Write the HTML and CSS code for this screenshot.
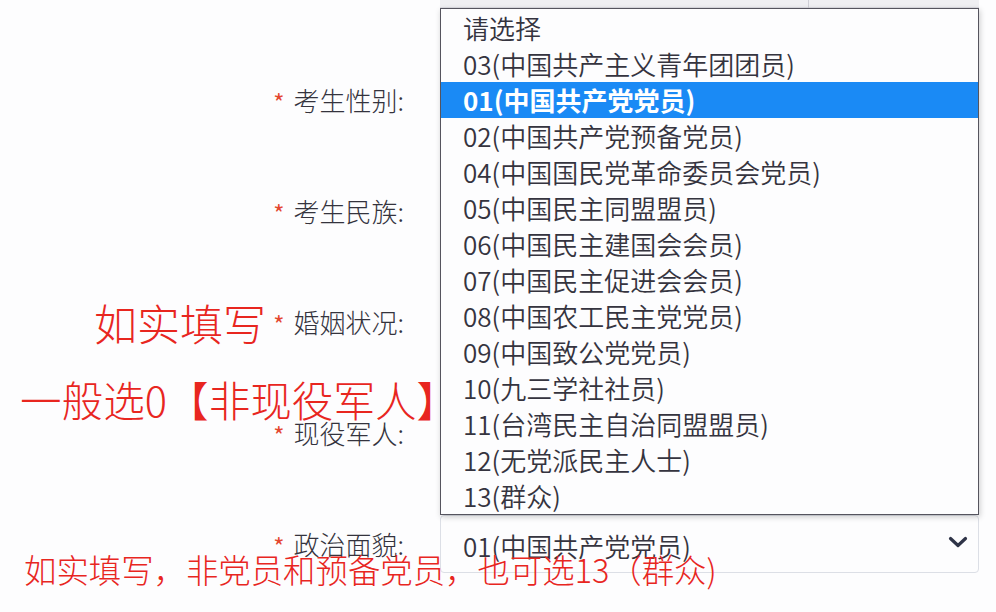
FILE: index.html
```html
<!DOCTYPE html>
<html lang="zh-CN">
<head>
<meta charset="utf-8">
<title>政治面貌</title>
<link rel="stylesheet" href="styles.css">
</head>
<body>
<div class="page">
  <div class="prev-field"><span class="prev-divider"></span></div>
  <form class="form">
    <div class="row">
      <label class="label"><span class="req">*</span>考生性别:</label>
      <div class="select"></div>
    </div>
    <div class="row">
      <label class="label"><span class="req">*</span>考生民族:</label>
      <div class="select"></div>
    </div>
    <div class="row">
      <label class="label"><span class="req">*</span>婚姻状况:</label>
      <div class="select"></div>
    </div>
    <div class="row">
      <label class="label"><span class="req">*</span>现役军人:</label>
      <div class="select"></div>
    </div>
    <div class="row">
      <label class="label"><span class="req">*</span>政治面貌:</label>
      <div class="select">
        <span class="select-value">01(中国共产党党员)</span>
        <svg class="chevron" width="20" height="12" viewBox="0 0 20 12"><path d="M2.5 2.5 L10 9.5 L17.5 2.5" fill="none" stroke="#2f3448" stroke-width="3.2" stroke-linecap="round" stroke-linejoin="round"/></svg>
      </div>
    </div>
  </form>

  <ul class="dropdown">
    <li class="opt">请选择</li>
    <li class="opt">03(中国共产主义青年团团员)</li>
    <li class="opt selected">01(中国共产党党员)</li>
    <li class="opt">02(中国共产党预备党员)</li>
    <li class="opt">04(中国国民党革命委员会党员)</li>
    <li class="opt">05(中国民主同盟盟员)</li>
    <li class="opt">06(中国民主建国会会员)</li>
    <li class="opt">07(中国民主促进会会员)</li>
    <li class="opt">08(中国农工民主党党员)</li>
    <li class="opt">09(中国致公党党员)</li>
    <li class="opt">10(九三学社社员)</li>
    <li class="opt">11(台湾民主自治同盟盟员)</li>
    <li class="opt">12(无党派民主人士)</li>
    <li class="opt">13(群众)</li>
  </ul>

  <div class="note note-marriage">如实填写</div>
  <div class="note note-army">一般选0【非现役军人】</div>
  <div class="note note-politics">如实填写，非党员和预备党员，也可选13（群众)</div>
</div>
</body>
</html>
```

FILE: styles.css
```css
html, body {
  margin: 0;
  padding: 0;
  background: #fdfdfe;
}

body {
  width: 996px;
  height: 612px;
  overflow: hidden;
  font-family: "Noto Sans CJK SC", "Noto Sans", sans-serif;
  font-weight: 300;
  color: #35343f;
}

.page {
  position: relative;
  width: 996px;
  height: 612px;
}

.prev-field {
  margin-left: 440px;
  width: 539px;
  height: 8px;
  background: #efeff2;
  border-bottom: 1px solid #dcdce2;
  box-sizing: border-box;
  position: relative;
}

.prev-divider {
  display: block;
  margin-left: 368px;
  width: 1px;
  height: 8px;
  background: #cfcfd6;
}

.form {
  margin: 63px 0 0 0;
  display: flex;
  flex-direction: column;
  gap: 53px;
}

.row {
  display: grid;
  grid-template-columns: 440px 539px;
  height: 58px;
  align-items: center;
}

.label {
  text-align: right;
  padding-right: 36px;
  font-size: 26px;
  line-height: 30px;
  color: #34333d;
  display: flex;
  justify-content: flex-end;
  align-items: center;
}

.req {
  color: #e4472f;
  font-size: 24px;
  font-weight: 400;
  margin-right: 9px;
  position: relative;
  top: 2px;
}

.select {
  box-sizing: border-box;
  height: 58px;
  border: 1px solid #dcdfe6;
  border-radius: 4px;
  background: #fdfdfe;
  display: flex;
  align-items: center;
  padding: 0 10px 0 22px;
  font-size: 26px;
  font-weight: 350;
  color: #35343f;
}

.select-value {
  flex: 1;
  position: relative;
  top: 1px;
}

.chevron {
  display: block;
  position: relative;
  top: -2px;
}

.dropdown {
  position: absolute;
  left: 440px;
  top: 8px;
  width: 539px;
  height: 507px;
  box-sizing: border-box;
  margin: 0;
  padding: 1px 0 0 0;
  list-style: none;
  background: #fdfdfe;
  border: 1px solid #55545e;
  box-shadow: 1px 2px 6px rgba(0, 0, 0, 0.2);
}

.opt {
  height: 36px;
  line-height: 36px;
  padding-left: 22px;
  font-size: 26px;
  font-weight: 350;
  color: #35343f;
  white-space: nowrap;
}

.opt.selected {
  background: #1a8af5;
  color: #ffffff;
  font-weight: 700;
}

.note {
  position: absolute;
  color: #e8261f;
  line-height: 1;
  white-space: nowrap;
}

.note-marriage {
  left: 94px;
  top: 301px;
  font-size: 43px;
}

.note-army {
  left: 20px;
  top: 379px;
  font-size: 41.6px;
}

.note-politics {
  left: 24px;
  top: 553px;
  font-size: 32.4px;
}
```
